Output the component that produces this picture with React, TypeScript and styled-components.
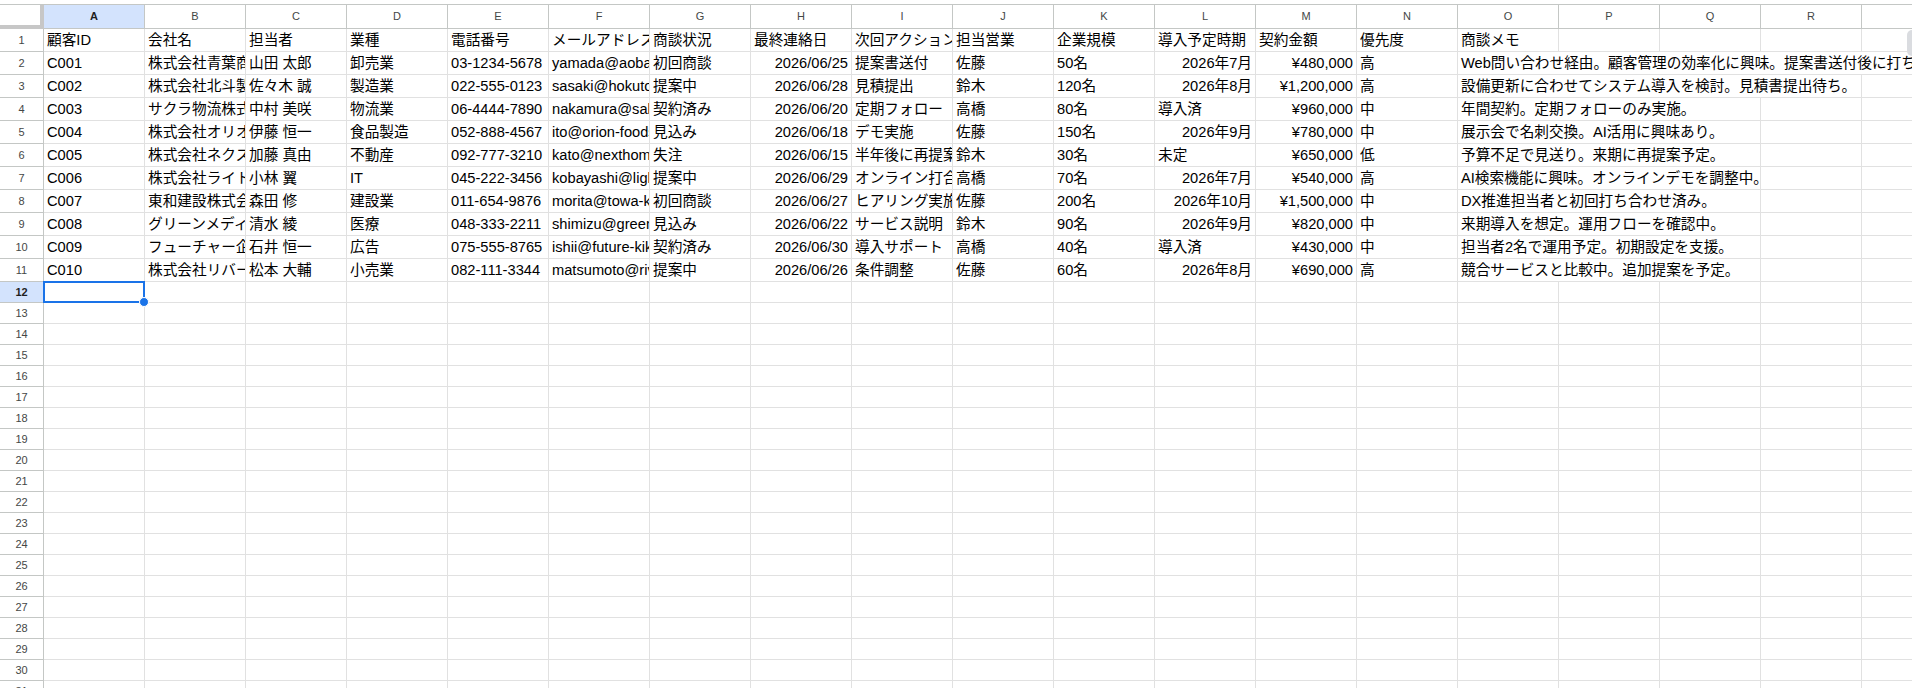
import * as React from 'react';
import styled, { createGlobalStyle } from 'styled-components';

const GlobalStyle = createGlobalStyle`
  html, body {
    margin: 0;
    padding: 0;
    background: #ffffff;
    overflow: hidden;
  }
  body {
    font-family: "Liberation Sans", "Noto Sans CJK JP", sans-serif;
  }
`;

const GRID_LINE = '#e1e1e1';
const HEAD_LINE = '#c4c7c5';
const SELECT_BLUE = '#1a73e8';

const COLUMNS = 'ABCDEFGHIJKLMNOPQRS'.split('');
const MEMO_INDEX = 14; // column O

type SheetRow = { cells: string[]; memoSpan?: number };

const ROWS: SheetRow[] = [
  {
    cells: ['顧客ID', '会社名', '担当者', '業種', '電話番号', 'メールアドレス', '商談状況', '最終連絡日', '次回アクション', '担当営業', '企業規模', '導入予定時期', '契約金額', '優先度', '商談メモ'],
    memoSpan: 1,
  },
  {
    cells: ['C001', '株式会社青葉商事', '山田 太郎', '卸売業', '03-1234-5678', 'yamada@aoba-shoji.co.jp', '初回商談', '2026/06/25', '提案書送付', '佐藤', '50名', '2026年7月', '¥480,000', '高', 'Web問い合わせ経由。顧客管理の効率化に興味。提案書送付後に打ち合わせ予定。'],
    memoSpan: 5,
  },
  {
    cells: ['C002', '株式会社北斗製作所', '佐々木 誠', '製造業', '022-555-0123', 'sasaki@hokuto-mfg.co.jp', '提案中', '2026/06/28', '見積提出', '鈴木', '120名', '2026年8月', '¥1,200,000', '高', '設備更新に合わせてシステム導入を検討。見積書提出待ち。'],
    memoSpan: 4,
  },
  {
    cells: ['C003', 'サクラ物流株式会社', '中村 美咲', '物流業', '06-4444-7890', 'nakamura@sakura-logi.co.jp', '契約済み', '2026/06/20', '定期フォロー', '高橋', '80名', '導入済', '¥960,000', '中', '年間契約。定期フォローのみ実施。'],
    memoSpan: 3,
  },
  {
    cells: ['C004', '株式会社オリオンフーズ', '伊藤 恒一', '食品製造', '052-888-4567', 'ito@orion-foods.co.jp', '見込み', '2026/06/18', 'デモ実施', '佐藤', '150名', '2026年9月', '¥780,000', '中', '展示会で名刺交換。AI活用に興味あり。'],
    memoSpan: 3,
  },
  {
    cells: ['C005', '株式会社ネクストホーム', '加藤 真由', '不動産', '092-777-3210', 'kato@nexthome.co.jp', '失注', '2026/06/15', '半年後に再提案', '鈴木', '30名', '未定', '¥650,000', '低', '予算不足で見送り。来期に再提案予定。'],
    memoSpan: 3,
  },
  {
    cells: ['C006', '株式会社ライトリンク', '小林 翼', 'IT', '045-222-3456', 'kobayashi@lightlink.co.jp', '提案中', '2026/06/29', 'オンライン打合せ', '高橋', '70名', '2026年7月', '¥540,000', '高', 'AI検索機能に興味。オンラインデモを調整中。'],
    memoSpan: 3,
  },
  {
    cells: ['C007', '東和建設株式会社', '森田 修', '建設業', '011-654-9876', 'morita@towa-kensetsu.co.jp', '初回商談', '2026/06/27', 'ヒアリング実施', '佐藤', '200名', '2026年10月', '¥1,500,000', '中', 'DX推進担当者と初回打ち合わせ済み。'],
    memoSpan: 3,
  },
  {
    cells: ['C008', 'グリーンメディカル株式会社', '清水 綾', '医療', '048-333-2211', 'shimizu@green-medical.jp', '見込み', '2026/06/22', 'サービス説明', '鈴木', '90名', '2026年9月', '¥820,000', '中', '来期導入を想定。運用フローを確認中。'],
    memoSpan: 3,
  },
  {
    cells: ['C009', 'フューチャー企画株式会社', '石井 恒一', '広告', '075-555-8765', 'ishii@future-kikaku.co.jp', '契約済み', '2026/06/30', '導入サポート', '高橋', '40名', '導入済', '¥430,000', '中', '担当者2名で運用予定。初期設定を支援。'],
    memoSpan: 3,
  },
  {
    cells: ['C010', '株式会社リバーサイド', '松本 大輔', '小売業', '082-111-3344', 'matsumoto@riverside.co.jp', '提案中', '2026/06/26', '条件調整', '佐藤', '60名', '2026年8月', '¥690,000', '高', '競合サービスと比較中。追加提案を予定。'],
    memoSpan: 3,
  },
];

const TOTAL_ROWS = 31;
const SELECTED = { row: 12, col: 0 };

const isRightAligned = (v: string) => /^\d{4}\/\d{2}\/\d{2}$|^\d{4}年\d+月$|^¥/.test(v);

const Sheet = styled.div`
  position: relative;
  width: 1912px;
  height: 688px;
  overflow: hidden;
  padding-top: 4px;
  box-sizing: border-box;
  background: #ffffff;
`;

const Grid = styled.div`
  border-top: 1px solid ${HEAD_LINE};
`;

// last column (S) is wider, so only its left edge shows in the window
const Row = styled.div<{ $height: number }>`
  display: grid;
  grid-template-columns: 44px repeat(18, 101px) 160px;
  height: ${(p) => p.$height}px;
`;

const Corner = styled.div`
  box-sizing: border-box;
  border-right: 4px solid #c7c7c7;
  border-bottom: 4px solid #c7c7c7;
`;

const ColumnHead = styled.div<{ $active?: boolean }>`
  box-sizing: border-box;
  border-right: 1px solid ${HEAD_LINE};
  border-bottom: 1px solid ${HEAD_LINE};
  background: ${(p) => (p.$active ? '#d3e3fd' : '#ffffff')};
  color: ${(p) => (p.$active ? '#1f1f1f' : '#444746')};
  font-weight: ${(p) => (p.$active ? 700 : 400)};
  font-size: 11px;
  line-height: 23px;
  text-align: center;
`;

const RowHead = styled.div<{ $active?: boolean }>`
  box-sizing: border-box;
  border-right: 1px solid ${HEAD_LINE};
  border-bottom: 1px solid ${HEAD_LINE};
  background: ${(p) => (p.$active ? '#d3e3fd' : '#ffffff')};
  color: ${(p) => (p.$active ? '#1f1f1f' : '#444746')};
  font-weight: ${(p) => (p.$active ? 700 : 400)};
  font-size: 11px;
  display: flex;
  align-items: center;
  justify-content: center;
`;

const Cell = styled.div<{ $align: 'left' | 'right'; $span: number; $lineHeight: number }>`
  position: relative;
  box-sizing: border-box;
  grid-column: span ${(p) => p.$span};
  border-right: 1px solid ${GRID_LINE};
  border-bottom: 1px solid ${GRID_LINE};
  padding: 0 3px;
  font-size: 14.67px;
  line-height: ${(p) => p.$lineHeight}px;
  color: #000000;
  text-align: ${(p) => p.$align};
  white-space: nowrap;
  overflow: hidden;
`;

const SelectedCell = styled.div`
  position: relative;
  box-sizing: border-box;
  border-right: 1px solid ${GRID_LINE};
  border-bottom: 1px solid ${GRID_LINE};
`;

const SelectionBox = styled.div`
  position: absolute;
  top: -1px;
  left: -1px;
  right: -1px;
  bottom: -1px;
  border: 2px solid ${SELECT_BLUE};
  z-index: 2;
`;

const FillHandle = styled.div`
  position: absolute;
  right: -6px;
  bottom: -6px;
  width: 8px;
  height: 8px;
  border-radius: 50%;
  background: ${SELECT_BLUE};
  border: 1px solid #ffffff;
`;

const ScrollThumb = styled.div`
  position: absolute;
  right: -5px;
  top: 30px;
  width: 10px;
  height: 26px;
  border-radius: 5px;
  background: #dadce0;
  z-index: 3;
`;

const HeaderRow = () => (
  <Row $height={24}>
    <Corner />
    {COLUMNS.map((c, i) => (
      <ColumnHead key={c} $active={i === SELECTED.col}>
        {c}
      </ColumnHead>
    ))}
  </Row>
);

const DataRow = ({ index, data }: { index: number; data?: SheetRow }) => {
  const height = data ? 23 : 21;
  const cells: React.ReactNode[] = [];
  let col = 0;
  while (col < COLUMNS.length) {
    if (index === SELECTED.row && col === SELECTED.col) {
      cells.push(
        <SelectedCell key={col}>
          <SelectionBox>
            <FillHandle />
          </SelectionBox>
        </SelectedCell>,
      );
      col += 1;
      continue;
    }
    const value = data?.cells[col] ?? '';
    const span = data && col === MEMO_INDEX ? Math.min(data.memoSpan ?? 1, COLUMNS.length - col) : 1;
    cells.push(
      <Cell key={col} $span={span} $align={isRightAligned(value) ? 'right' : 'left'} $lineHeight={height - 1}>
        {value}
      </Cell>,
    );
    col += span;
  }
  return (
    <Row $height={height}>
      <RowHead $active={index === SELECTED.row}>{index}</RowHead>
      {cells}
    </Row>
  );
};

export default function App() {
  const rowNumbers = Array.from({ length: TOTAL_ROWS }, (_, i) => i + 1);
  return (
    <>
      <GlobalStyle />
      <Sheet>
        <Grid>
          <HeaderRow />
          {rowNumbers.map((n) => (
            <DataRow key={n} index={n} data={ROWS[n - 1]} />
          ))}
        </Grid>
        <ScrollThumb />
      </Sheet>
    </>
  );
}
